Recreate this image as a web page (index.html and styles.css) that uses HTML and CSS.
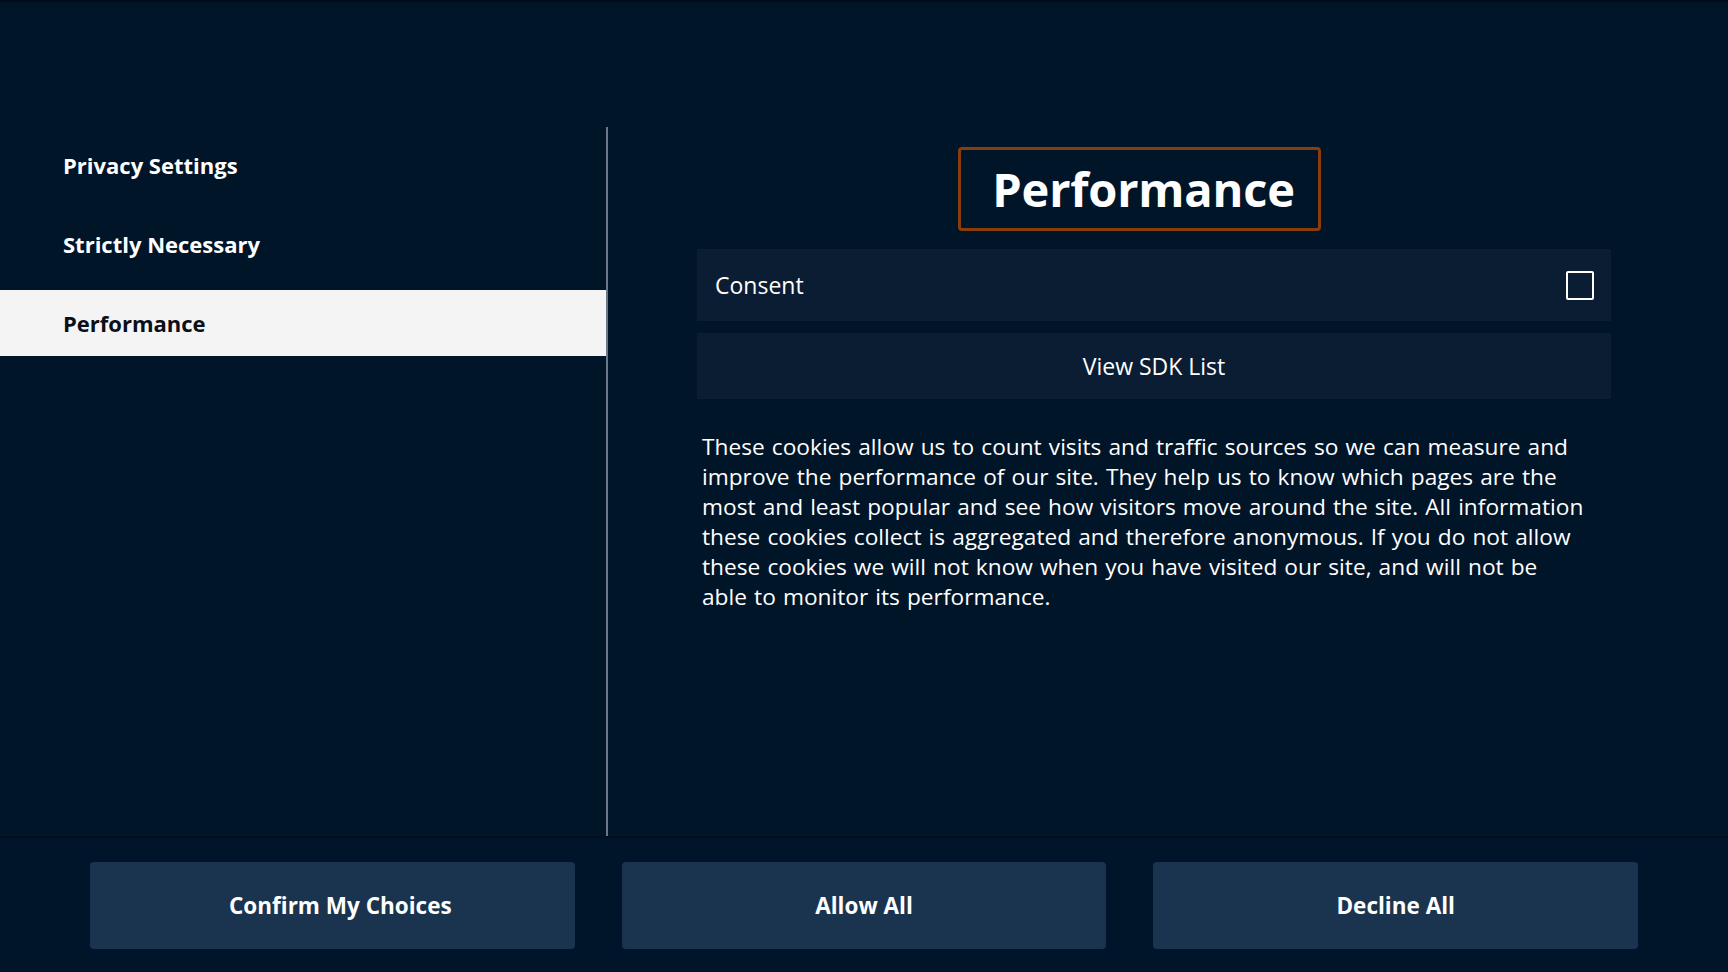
FILE: index.html
```html
<!DOCTYPE html>
<html lang="en">
<head>
<meta charset="utf-8">
<title>Privacy Settings</title>
<link rel="stylesheet" href="styles.css">
</head>
<body>
<div class="screen">
  <div class="main">
    <nav class="sidebar">
      <div class="nav-item">Privacy Settings</div>
      <div class="nav-item">Strictly Necessary</div>
      <div class="nav-item active">Performance</div>
    </nav>
    <section class="panel">
      <div class="title-box"><h1 class="title">Performance</h1></div>
      <div class="row consent-row">
        <span class="row-label">Consent</span>
        <span class="checkbox"></span>
      </div>
      <div class="row sdk-row">View SDK List</div>
      <p class="desc">These cookies allow us to count visits and traffic sources so we can measure and improve the performance of our site. They help us to know which pages are the most and least popular and see how visitors move around the site. All information these cookies collect is aggregated and therefore anonymous. If you do not allow these cookies we will not know when you have visited our site, and will not be able to monitor its performance.</p>
    </section>
  </div>
  <footer class="actions">
    <div class="btn"><span class="btn-label shifted">Confirm My Choices</span></div>
    <div class="btn"><span class="btn-label">Allow All</span></div>
    <div class="btn"><span class="btn-label">Decline All</span></div>
  </footer>
</div>
</body>
</html>
```
FILE: styles.css
```css
* { box-sizing: border-box; }
html, body { margin: 0; padding: 0; }
body {
  width: 1728px;
  height: 972px;
  overflow: hidden;
  background: #011529;
  color: #ffffff;
  font-family: "Open Sans", "Liberation Sans", sans-serif;
}
.screen {
  display: flex;
  flex-direction: column;
  height: 972px;
  border-top: 2px solid #000b1a;
}
.main {
  display: flex;
  height: 834px;
}
.sidebar {
  width: 608px;
  margin-top: 125px;
  padding-top: 5px;
  border-right: 2px solid #6b7686;
  display: flex;
  flex-direction: column;
  gap: 13px;
}
.nav-item {
  height: 66px;
  display: flex;
  align-items: center;
  padding-left: 63px;
  font-size: 22px;
  font-weight: 700;
}
.nav-item.active {
  background: #f4f4f5;
  color: #0b0f17;
}
.panel {
  padding-left: 89px;
  padding-top: 145px;
  width: 1003px;
  display: flex;
  flex-direction: column;
}
.title-box {
  margin-left: 261px;
  width: 363px;
  height: 84px;
  border: 3px solid #8a3c0c;
  border-radius: 4px;
  display: flex;
  align-items: center;
  justify-content: center;
  padding-left: 8px;
}
.title {
  margin: 0;
  font-size: 47px;
  font-weight: 700;
  letter-spacing: -0.2px;
}
.row {
  background: #0a1d33;
  width: 914px;
}
.consent-row {
  margin-top: 18px;
  height: 72px;
  display: flex;
  align-items: center;
  justify-content: space-between;
  padding: 0 17px 0 18px;
}
.row-label {
  font-size: 23px;
}
.checkbox {
  width: 28px;
  height: 29px;
  border: 2px solid #ffffff;
  border-radius: 2px;
}
.sdk-row {
  margin-top: 12px;
  height: 66px;
  display: flex;
  align-items: center;
  justify-content: center;
  font-size: 23px;
}
.desc {
  margin: 33px 0 0 5px;
  width: 884px;
  font-size: 22.7px;
  word-spacing: 1.2px;
  line-height: 30px;
}
.actions {
  flex: 1;
  display: flex;
  gap: 47px;
  padding: 24px 90px 23px 90px;
  border-top: 2px solid #000e1e;
  background: #01152a;
}
.btn {
  flex: 1 1 0;
  background: #1a3450;
  border-radius: 4px;
  display: flex;
  align-items: center;
  justify-content: center;
  font-size: 22.5px;
  font-weight: 700;
}
.btn-label.shifted {
  margin-left: 16px;
}
```
